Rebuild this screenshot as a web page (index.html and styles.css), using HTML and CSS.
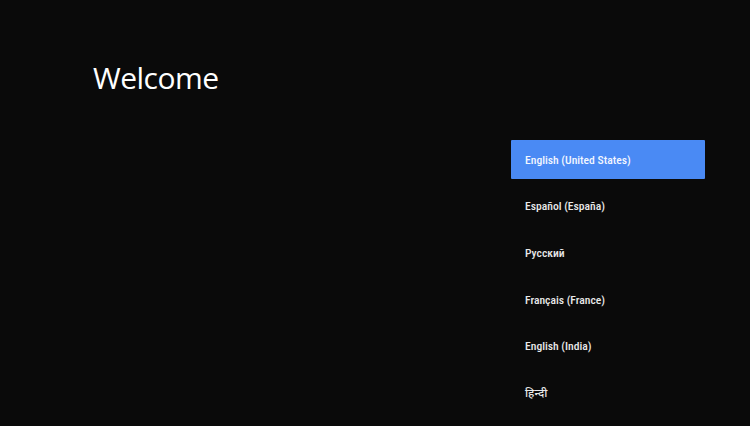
FILE: index.html
```html
<!DOCTYPE html>
<html>
<head>
<meta charset="utf-8">
<link rel="stylesheet" href="styles.css">
</head>
<body>
<div class="screen">
  <div class="left">
    <h1 class="title">Welcome</h1>
  </div>
  <ul class="langs">
    <li class="lang active">English (United States)</li>
    <li class="lang">Español (España)</li>
    <li class="lang">Русский</li>
    <li class="lang">Français (France)</li>
    <li class="lang">English (India)</li>
    <li class="lang">हिन्दी</li>
  </ul>
</div>
</body>
</html>
```
FILE: styles.css
```css
html, body {
  margin: 0;
  padding: 0;
  background: #0a0a0a;
}
.screen {
  width: 750px;
  height: 426px;
  overflow: hidden;
  display: flex;
  justify-content: space-between;
  background: #0a0a0a;
}
.left {
  padding: 58px 0 0 93px;
}
.title {
  margin: 0;
  font-family: "Open Sans", sans-serif;
  font-weight: 400;
  font-size: 30px;
  line-height: 40px;
  color: #ffffff;
  letter-spacing: -0.5px;
}
.langs {
  list-style: none;
  margin: 140px 45px 0 0;
  padding: 0;
  width: 194px;
  display: flex;
  flex-direction: column;
  gap: 7.7px;
}
.lang {
  height: 39px;
  display: flex;
  align-items: center;
  padding-left: 14px;
  font-family: Roboto, "Noto Sans", "Noto Sans Devanagari", sans-serif;
  font-weight: 500;
  font-stretch: 75%;
  font-size: 11.6px;
  color: #e8e8e8;
  border-radius: 1px;
}
.lang.active {
  background: #4a8af4;
  color: #f2f6ff;
}
```
